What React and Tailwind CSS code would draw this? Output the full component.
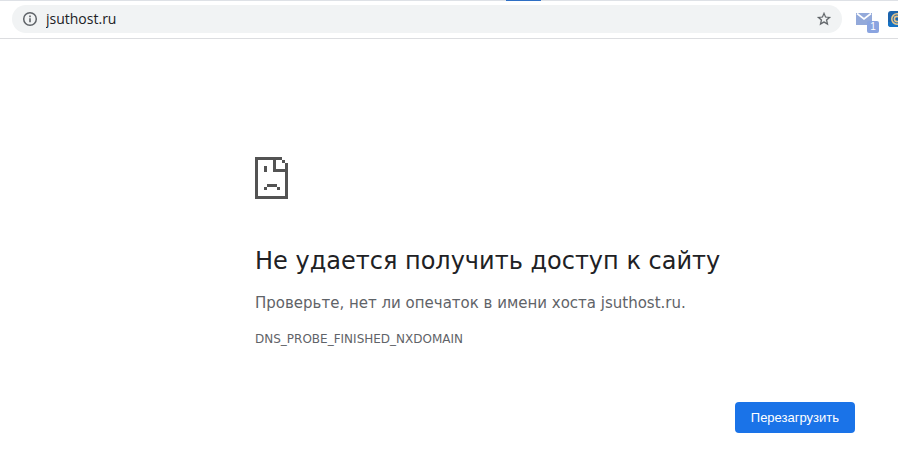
const InfoIcon = () => (
  <svg className="h-4 w-4 shrink-0" viewBox="0 0 16 16" fill="none" aria-hidden="true">
    <circle cx="8" cy="8" r="6.3" stroke="#5f6368" strokeWidth="1.5" />
    <path d="M7.2 7.2h1.6v4H7.2zM7.2 4.6h1.6v1.6H7.2z" fill="#5f6368" />
  </svg>
)

const StarIcon = () => (
  <svg className="h-4 w-4" viewBox="0 0 24 24" fill="#5f6368" stroke="#5f6368" strokeWidth="0.2" aria-hidden="true">
    <path d="M22.5 9.1l-7.5-.65L12 1.5 9 8.46l-7.5.64 5.7 4.94L5.5 21.4 12 17.5l6.5 3.9-1.7-7.36zM12 15.3l-3.9 2.35 1.03-4.43-3.44-2.98 4.54-.39L12 5.65l1.8 4.2 4.5.39-3.42 2.98 1.03 4.43z" />
  </svg>
)

const MailIcon = () => (
  <svg className="h-6 w-6" viewBox="0 0 24 24" aria-hidden="true">
    <path d="M1 6h16v12H1z" fill="#93a9da" />
    <path d="M2 6.5l7 5.5 7-5.5" fill="#93a9da" stroke="#fff" strokeWidth="1.6" />
  </svg>
)

const RingIcon = () => (
  <svg className="h-4 w-4" viewBox="0 0 16 16" fill="none" aria-hidden="true">
    <rect width="16" height="16" rx="3" fill="#1b63ad" />
    <path d="M0 11v2a3 3 0 0 0 3 3h13v-4z" fill="#1673c4" />
    <circle cx="9" cy="8" r="5.2" stroke="#e5c58b" strokeWidth="1.6" />
    <circle cx="9" cy="8" r="2.6" stroke="#e5c58b" strokeWidth="1.6" />
  </svg>
)

const SadPageIcon = () => (
  <svg
    className="h-[42px] w-[33px]"
    viewBox="0 0 33 42"
    fill="#535353"
    shapeRendering="crispEdges"
    aria-hidden="true"
  >
    <path d="M0 0h27v3H21v9h9V6h3v36H0zM3 3v36h27V15H18V3z" fillRule="evenodd" />
    <path d="M27 3h3v3h-3zM9 9h3v6H9zM12 27h10v3H12zM9 30h3v3H9zM22 30h3v3h-3z" />
  </svg>
)

const Toolbar = () => (
  <header className="border-b border-[#dcdde0] bg-white">
    <div className="flex h-px justify-center bg-[#dee1e6] pl-[149px]">
      <div className="w-[35px] bg-[#2f6fc4]" />
    </div>
    <div className="flex h-[37px] items-center overflow-hidden pb-px pl-3">
      <div className="flex h-7 min-w-0 flex-1 items-center gap-2 rounded-full bg-[#f1f3f4] px-[10px]">
        <InfoIcon />
        <input
          type="text"
          aria-label="Адрес сайта"
          defaultValue="jsuthost.ru"
          className="min-w-0 flex-1 bg-transparent font-['Open_Sans','Noto_Sans',sans-serif] text-sm text-[#202124] outline-none"
        />
        <button type="button" aria-label="Добавить в закладки">
          <StarIcon />
        </button>
      </div>
      <div className="flex shrink-0 items-center gap-[9px] pl-[13px]">
        <button type="button" aria-label="Почта" className="relative">
          <MailIcon />
          <span className="absolute right-0 -bottom-[2px] h-3 w-3 rounded-xs bg-[#8aa4e0] text-center font-['Liberation_Sans',sans-serif] text-[10px] leading-3 text-white">
            1
          </span>
        </button>
        <button type="button" aria-label="Расширение" className="-mr-[6px]">
          <RingIcon />
        </button>
      </div>
    </div>
  </header>
)

const ErrorPage = () => (
  <main className="px-6 pt-[118px] pb-9 sm:pr-0 sm:pl-[255px]">
    <div className="max-w-[600px] font-['DejaVu_Sans',sans-serif] text-[#5f6368]">
      <SadPageIcon />
      <h1 className="mt-[46px] text-2xl leading-8 text-[#202124]">Не удается получить доступ к сайту</h1>
      <p className="mt-[14px] text-[15px] leading-6">Проверьте, нет ли опечаток в имени хоста jsuthost.ru.</p>
      <p className="mt-4 text-xs">DNS_PROBE_FINISHED_NXDOMAIN</p>
      <div className="mt-[55px] flex justify-end">
        <button
          type="button"
          className="rounded bg-[#1a73e8] px-4 py-2 font-['Liberation_Sans',sans-serif] text-[13px] leading-[15px] text-white"
        >
          Перезагрузить
        </button>
      </div>
    </div>
  </main>
)

const App = () => (
  <div className="min-h-screen overflow-x-hidden bg-white">
    <Toolbar />
    <ErrorPage />
  </div>
)

export default App
